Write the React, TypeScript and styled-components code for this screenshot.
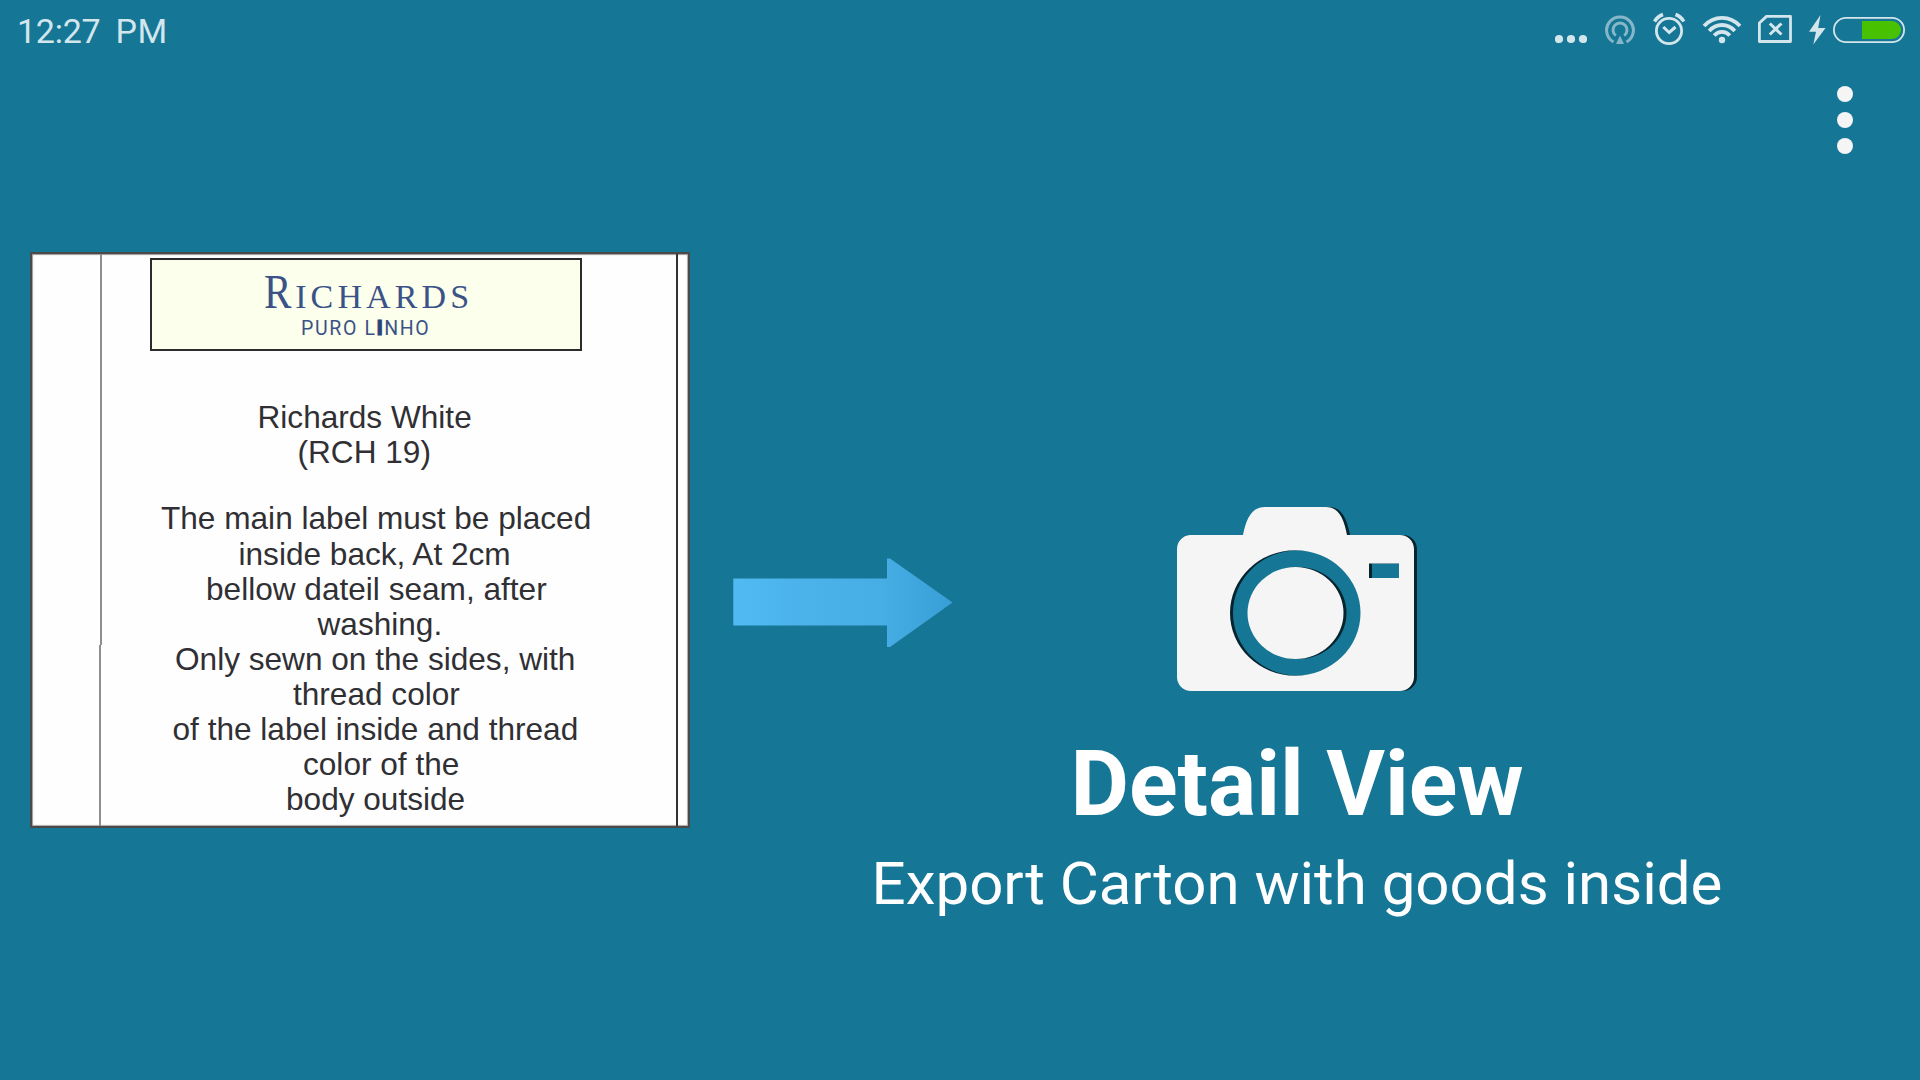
import React from "react";
import styled, { createGlobalStyle } from "styled-components";

const GlobalStyle = createGlobalStyle`
  * { box-sizing: border-box; }
  body { margin: 0; background: #167696; }
`;

const Screen = styled.div`
  width: 1920px;
  height: 1080px;
  overflow: hidden;
  display: flex;
  flex-direction: column;
  background: #167696;
  font-family: Roboto, sans-serif;
`;

const StatusBar = styled.header`
  height: 60px;
  display: flex;
  justify-content: space-between;
  padding: 0 15px 0 17px;
  color: #d3e6ec;
`;

const Clock = styled.div`
  display: flex;
  gap: 15px;
  font-size: 34px;
  line-height: 62px;
  font-weight: 400;
`;

const ClockPart = styled.span<{ $spacing: number }>`
  letter-spacing: ${(p) => p.$spacing}px;
`;

const StatusIcons = styled.div`
  display: flex;
  height: 60px;
`;

const StatusIcon = styled.svg<{ $gap?: number }>`
  display: block;
  flex: none;
  height: 60px;
  margin-left: ${(p) => p.$gap ?? 0}px;
`;

const Toolbar = styled.div`
  height: 120px;
  display: flex;
  justify-content: flex-end;
  padding: 26px 67px 0 0;
`;

const MenuButton = styled.button`
  width: 16px;
  height: 68px;
  padding: 0;
  border: 0;
  background: none;
  display: flex;
  flex-direction: column;
  justify-content: space-between;
`;

const MenuDot = styled.span`
  width: 16px;
  height: 16px;
  border-radius: 50%;
  background: #f5f5f5;
`;

const Main = styled.main`
  flex: 1;
  display: flex;
  align-items: flex-start;
  padding: 72px 0 0 30px;
`;

const LabelCard = styled.section`
  width: 660px;
  height: 576px;
  display: flex;
  background: #fefefe;
  border: 2px solid #4b494a;
  box-shadow: inset 1px 1px 1px #999, inset -1px -1px 1px #aaa;
`;

const Margin = styled.div`
  width: 70px;
  display: flex;
  flex-direction: column;
`;

const MarginRule = styled.div<{ $height: number; $inset?: number }>`
  height: ${(p) => p.$height}px;
  margin-right: ${(p) => p.$inset ?? 0}px;
  border-right: 2px solid #8e8e8e;
`;

const LabelBody = styled.div`
  width: 576px;
  border-right: 2px solid #333;
`;

const BrandBox = styled.div`
  width: 432px;
  height: 93px;
  margin: 4px 0 0 48px;
  border: 2px solid #2b2b2b;
  background: #fcffeb;
  color: #3a5288;
`;

const BrandName = styled.div`
  display: flex;
  height: 60px;
  padding-left: 112px;
  align-items: baseline;
  font-family: "Liberation Serif", serif;
  font-size: 34px;
  line-height: 74px;
  letter-spacing: 4.1px;
  white-space: nowrap;
`;

const Initial = styled.span`
  width: 31.2px;
  font-size: 49px;
  line-height: 0;
  letter-spacing: 0;
  transform: scaleX(0.84);
  transform-origin: left;
`;

const BrandLine = styled.div`
  display: flex;
  align-items: center;
  height: 17px;
  padding-left: 149px;
  font-size: 19.5px;
  line-height: 17px;
  letter-spacing: 1.65px;
  white-space: pre;
`;

const Stem = styled.b`
  font-weight: 900;
  color: #274378;
  -webkit-text-stroke: 1px #274378;
`;

const Copy = styled.div<{ $top: number }>`
  margin-top: ${(p) => p.$top}px;
  font-family: "Liberation Sans", Arial, sans-serif;
  font-size: 31.6px;
  line-height: 35.1px;
  color: #303034;
`;

const CopyLine = styled.div<{ $left: number }>`
  height: 35.1px;
  padding-left: ${(p) => p.$left}px;
  white-space: nowrap;
`;

const Arrow = styled.svg`
  display: block;
  flex: none;
  margin: 305px 0 0 42px;
`;

const Detail = styled.section`
  width: 850px;
  margin-left: -82px;
  padding-top: 254px;
  display: flex;
  flex-direction: column;
  align-items: center;
  color: #fff;
`;

const Camera = styled.svg`
  display: block;
  margin-left: 2px;
`;

const Title = styled.h1`
  margin: 37px 0 0;
  font-size: 90px;
  line-height: 110px;
  font-weight: 700;
  white-space: nowrap;
`;

const Subtitle = styled.p`
  margin: 7px 0 0;
  font-size: 60px;
  line-height: 74px;
  white-space: nowrap;
`;

const cameraPath =
  "M14 29H67C70 14 75 1 89 1H150C163 1 168 13 171 29H223A14 14 0 0 1 238 43V171A14 14 0 0 1 223 185H15A14 14 0 0 1 1 171V43A14 14 0 0 1 14 29Z" +
  "M54 107A65 62.5 0 1 0 184.5 107A65 62.5 0 1 0 54 107Z" +
  "M71.500 107A48 46 0 1 1 167.500 107A48 46 0 1 1 71.500 107Z" +
  "M193 57.500H223V72H193Z";

const heading = [
  { text: "Richards White", left: 155.5 },
  { text: "(RCH 19)", left: 195.5 },
];

const instructions = [
  { text: "The main label must be placed", left: 59 },
  { text: "inside back, At 2cm", left: 136.5 },
  { text: "bellow dateil seam, after", left: 104 },
  { text: "washing.", left: 215.5 },
  { text: "Only sewn on the sides, with", left: 73 },
  { text: "thread color", left: 191 },
  { text: "of the label inside and thread", left: 70.5 },
  { text: "color of the", left: 201 },
  { text: "body outside", left: 184 },
];

export default function App() {
  return (
    <Screen>
      <GlobalStyle />
      <StatusBar>
        <Clock>
          <ClockPart $spacing={-0.25}>12:27</ClockPart>
          <ClockPart $spacing={0.6}>PM</ClockPart>
        </Clock>
        <StatusIcons>
          <StatusIcon width="32" viewBox="1555 0 32 60" fill="#d3e6ec">
            <circle cx="1559" cy="39" r="4.100" />
            <circle cx="1571" cy="39" r="4.100" />
            <circle cx="1583" cy="39" r="4.100" />
          </StatusIcon>
          <StatusIcon $gap={18} width="30" viewBox="1605 0 30 60" fill="none" stroke="#86b7c8" strokeWidth="3">
            <path d="M1613.500 42A13.400 13.400 0 1 1 1626.500 42" />
            <path d="M1615.800 35.600A7 7 0 1 1 1624.200 35.600" />
            <path d="M1620 35.500L1624 44H1616Z" fill="#86b7c8" stroke="none" />
          </StatusIcon>
          <StatusIcon $gap={18} width="34" viewBox="1653 0 34 60" fill="none" stroke="#d3e6ec" strokeWidth="2.800">
            <circle cx="1669" cy="31" r="12.600" />
            <path d="M1663.300 27L1669.200 32.500L1675.500 27" strokeWidth="3" />
            <path d="M1654.500 21.500Q1657.500 16.500 1663 14.500M1675.500 14.500Q1681 16.500 1683.800 21.500" strokeWidth="3.500" />
          </StatusIcon>
          <StatusIcon $gap={15} width="40" viewBox="1702 0 40 60" fill="none" stroke="#d3e6ec" strokeWidth="3.800">
            <path d="M1704 26Q1711.500 17.800 1722 17.800Q1732.500 17.800 1740 26" />
            <path d="M1709.200 31Q1714.500 25 1722 25Q1729.500 25 1734.800 31" />
            <path d="M1714.200 35.600Q1717.500 31.900 1722 31.900Q1726.500 31.900 1729.800 35.600" />
            <circle cx="1722" cy="40" r="3.200" fill="#d3e6ec" stroke="none" />
          </StatusIcon>
          <StatusIcon $gap={15} width="36" viewBox="1757 0 36 60" fill="none" stroke="#d3e6ec" strokeWidth="2.800" strokeLinejoin="round">
            <path d="M1766.500 16.400H1790.500V41.500H1759.400V23Z" />
            <path d="M1769.800 23.500L1781.500 34.500M1781.500 23.500L1769.800 34.500" strokeWidth="3" />
          </StatusIcon>
          <StatusIcon $gap={15} width="18" viewBox="1808 0 18 60" fill="#d3e6ec">
            <path d="M1820.500 15L1809 31.800H1816L1813.300 44.500L1825.500 28H1818.200Z" />
          </StatusIcon>
          <StatusIcon $gap={7} width="72" viewBox="1833 0 72 60" fill="none">
            <rect x="1833.900" y="17.900" width="70.200" height="24.200" rx="12.100" stroke="#d3e6ec" strokeWidth="1.800" />
            <path d="M1862 21H1892A9 9 0 0 1 1892 39H1862Z" fill="#48c200" />
          </StatusIcon>
        </StatusIcons>
      </StatusBar>

      <Toolbar>
        <MenuButton aria-label="More options">
          <MenuDot />
          <MenuDot />
          <MenuDot />
        </MenuButton>
      </Toolbar>

      <Main>
        <LabelCard>
          <Margin>
            <MarginRule $height={391} />
            <MarginRule $height={181} $inset={1} />
          </Margin>
          <LabelBody>
            <BrandBox>
              <BrandName>
                <Initial>R</Initial>ICHARDS
              </BrandName>
              <BrandLine>
                PURO L<Stem>I</Stem>NHO
              </BrandLine>
            </BrandBox>
            <Copy $top={48.5}>
              {heading.map((l) => (
                <CopyLine key={l.text} $left={l.left}>{l.text}</CopyLine>
              ))}
            </Copy>
            <Copy $top={31.8}>
              {instructions.map((l) => (
                <CopyLine key={l.text} $left={l.left}>{l.text}</CopyLine>
              ))}
            </Copy>
          </LabelBody>
        </LabelCard>

        <Arrow width="222" height="92" viewBox="0 0 222 92">
          <defs>
            <linearGradient id="arrowFill" x1="0" x2="1" y1="0" y2="0">
              <stop offset="0" stopColor="#51baf2" />
              <stop offset="0.300" stopColor="#4bb3ea" />
              <stop offset="0.680" stopColor="#47ade5" />
              <stop offset="1" stopColor="#389ed6" />
            </linearGradient>
          </defs>
          <path d="M1.300 21.500H155V1.500H158L220.500 45.500L158 90H155V68.500H1.300Z" fill="url(#arrowFill)" />
        </Arrow>

        <Detail>
          <Camera width="244" height="187" viewBox="0 0 244 187" fillRule="evenodd">
            <path d={cameraPath} transform="translate(3 0)" fill="#06242e" />
            <path d={cameraPath} fill="#f5f5f5" />
          </Camera>
          <Title>Detail View</Title>
          <Subtitle>Export Carton with goods inside</Subtitle>
        </Detail>
      </Main>
    </Screen>
  );
}
